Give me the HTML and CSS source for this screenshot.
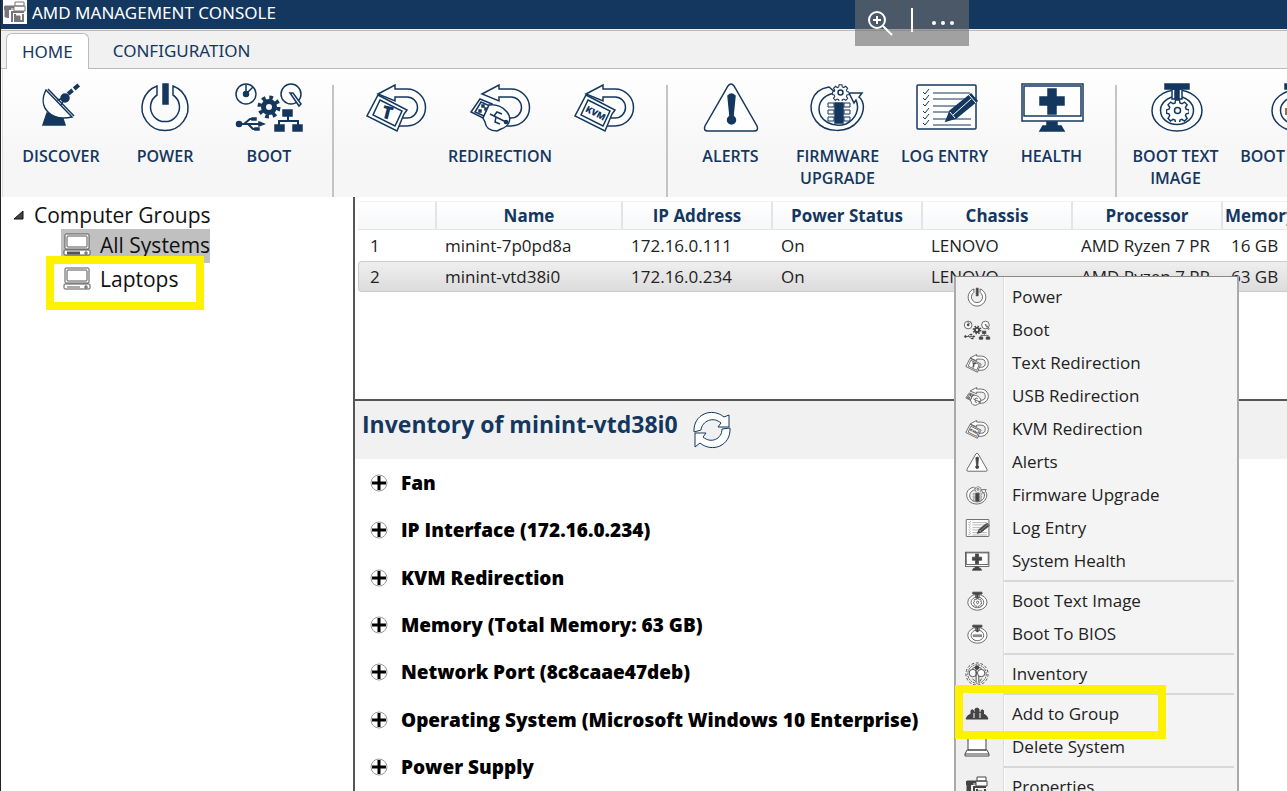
FILE: index.html
```html
<!DOCTYPE html>
<html lang="en">
<head>
<meta charset="utf-8">
<title>AMD Management Console</title>
<link rel="stylesheet" href="styles.css">
</head>
<body>
<svg class="sprite" aria-hidden="true">
  <defs>
    <symbol id="discover" viewBox="0 0 72 52">
      <path class="solid" d="M22 32 L37 35 L40 44 H18 Z"/>
      <path class="face" d="M21 9 C12 26 26 41 47 36 Z"/>
      <path d="M23 8 L49 35"/>
      <path d="M32 19 L40 17 M36 24 L40 17"/>
      <circle class="solid" cx="40" cy="17" r="4"/>
      <path class="thick" d="M43 13 L55 3" stroke-dasharray="6 2"/>
    </symbol>
    <symbol id="power" viewBox="0 0 72 52">
      <path class="face" d="M28 5 A23 23 0 1 0 44 5 V14 A14.500 14.500 0 1 1 28 14 Z"/>
      <path class="solid" d="M34 3 H39 V23 H34 Z"/>
    </symbol>
    <symbol id="gear" viewBox="0 0 24 24">
      <path class="face" d="M10 1h4l.6 3.200 2 .8 2.700-1.800 2.800 2.800-1.800 2.700.8 2 3 .6v3.600l-3 .6-.8 2 1.800 2.700-2.800 2.800-2.700-1.800-2 .8-.6 3h-4l-.6-3-2-.8-2.700 1.800L2.100 20.200l1.800-2.700-.8-2-2.600-.6v-3.600l2.600-.6.8-2L2.100 6l2.800-2.800L7.500 5l2-.8z"/>
    </symbol>
    <symbol id="boot" viewBox="0 0 72 52">
      <circle class="face" cx="13" cy="13" r="10"/><circle class="solid" cx="13" cy="13" r="2.500"/><path d="M13 4 V13 L20 6"/>
      <circle class="face" cx="58" cy="13" r="10"/><path class="face" d="M57 12 L66 25 L68 23 L60 12 Z"/>
      <circle cx="36" cy="26" r="5.500" stroke-width="5"/>
      <circle cx="36" cy="26" r="9.500" stroke-width="4" stroke-dasharray="3.700 3.760"/>
      <circle class="solid" cx="6" cy="43" r="2.500"/><path class="mid" d="M6 43 H28 M11 43 L17 38 H22 M15 43 L20 48 H25"/><path class="solid" d="M26 41 L31 43 L26 45 Z M19 37h4v2h-4z M22 47h4v2h-4z"/>
      <path class="solid" d="M50 29h9v6h-9z M42 44h9v6h-9z M60 44h9v6h-9z"/><path class="mid" d="M55 35 V40 M46 44 V40 H65 V44"/>
    </symbol>
    <symbol id="loop" viewBox="0 0 72 52">
      <path class="face" d="M18 13 L35 4 V8 H47 A18.500 18.500 0 0 1 47 45 H34 V37 H47 A10.500 10.500 0 0 0 47 16 H35 V20 Z"/>
    </symbol>
    <symbol id="card" viewBox="0 0 72 52">
      <path class="face" d="M18 14 L47 29 L44 33 L37 50 L7 35 Z"/>
      <path class="face" d="M20 19 L42 30 L35 45 L13 34 Z"/>
    </symbol>
    <symbol id="text-redirect" viewBox="0 0 72 52">
      <use href="#loop"/><use href="#card"/>
      <text class="glyph" x="22" y="38" font-size="18" transform="rotate(14 27 32)">T</text>
    </symbol>
    <symbol id="kvm-redirect" viewBox="0 0 72 52">
      <use href="#loop"/><use href="#card"/>
      <text class="glyph" x="17" y="35" font-size="9" transform="rotate(27 27 32)">KVM</text>
    </symbol>
    <symbol id="usb-redirect" viewBox="0 0 72 52">
      <use href="#loop"/>
      <path class="face" d="M16 18 L28 23 L21 38 L7 31 Z"/><path d="M17 21 L26 25 L20 35 L11 31 Z"/>
      <path class="solid" d="M18 24h2v2h-2z M21 27h1v2h-1z M15 29h2v2h-2z"/>
      <path class="face" d="M25 24 C32 23 39 26 43 31 C48 37 46 45 37 48 L33 50 C27 50 22 48 21 41 L19 37 Z"/>
      <path d="M26 33 L42 41 M30 35 L33 31 L38 33 M32 36 L31 41 L36 43"/><circle class="solid" cx="42" cy="41" r="1.500"/>
    </symbol>
    <symbol id="alert" viewBox="0 0 72 52">
      <path class="face" d="M33 5 Q36 1 39 5 L62 45 Q64 50 59 50 H13 Q8 50 10 45 Z"/>
      <path class="solid" d="M33 15 Q36.500 11 40 15 L38 35 H35 Z"/><circle class="solid" cx="36.500" cy="39" r="4"/>
    </symbol>
    <symbol id="firmware" viewBox="0 0 72 52">
      <path class="face" d="M27 6 C8 9 5 28 14 40 C23 52 46 53 56 40 C64 30 62 20 57 16 L60 12 L47 12 L52 22 L54 19 C58 28 54 38 44 43 C31 47 17 40 17 28 C17 18 25 13 34 12 Z"/>
      <path d="M26 22h6v4h-6z M26 29h6v4h-6z M26 36h6v4h-6z M42 22h6v4h-6z M42 29h6v4h-6z M42 36h6v4h-6z" stroke-width="1"/>
      <path class="solid" d="M33 22 H41 V42 H33 Z"/>
      <svg x="30" y="3" width="17" height="17" viewBox="0 0 24 24"><use href="#gear"/></svg><circle class="face" cx="38.500" cy="11.500" r="2.500"/>
    </symbol>
    <symbol id="log" viewBox="0 0 72 52">
      <rect class="face" x="8" y="4" width="59" height="44" rx="1"/>
      <path stroke-width="1" d="M14 11l2 2 4-5 M14 17l2 2 4-5 M14 23l2 2 4-5 M14 30l2 2 4-5 M14 36l2 2 4-5 M14 42l2 2 4-5"/>
      <path stroke-width="1" d="M24 12h37 M24 18h34 M24 25h30 M24 31h25 M24 38h38 M24 44h38"/>
      <path class="solid" d="M37 40 L41 30 L62 13 L68 20 L47 37 Z"/><path class="gap" d="M60 14 L67 22 M41 31 L46 37 M44 34 L62 18"/>
    </symbol>
    <symbol id="health" viewBox="0 0 72 52">
      <rect class="face" x="6" y="3" width="61" height="37"/><rect class="face" x="8" y="5" width="57" height="30"/>
      <path class="solid" d="M32 8h8v8h8v8h-8v9h-8v-9h-8v-8h8z M31 41h10v4h4l3 5H24l3-5h4z"/>
    </symbol>
    <symbol id="ring" viewBox="0 0 72 52">
      <ellipse class="face" cx="37" cy="29.500" rx="25" ry="20.500"/><ellipse class="face" cx="37" cy="29.500" rx="16.500" ry="14"/>
      <path class="face" d="M32 8h10v10h-10z"/>
      <path class="solid" d="M25 3h24v5H25z"/>
    </symbol>
    <symbol id="boot-text" viewBox="0 0 72 52">
      <use href="#ring"/><svg x="26" y="18" width="23" height="23" viewBox="0 0 24 24"><use href="#gear"/></svg><circle class="face" cx="37.500" cy="29.500" r="3"/>
      <path class="solid" d="M35 8h4v10h-4z"/>
    </symbol>
    <symbol id="boot-bios" viewBox="0 0 72 52">
      <use href="#ring"/><path class="solid" d="M35 8h4v12h-4z"/><path class="bios" d="M25 27h24v7H25z"/>
    </symbol>
    <symbol id="inventory" viewBox="0 0 26 26">
      <circle cx="13" cy="13" r="12" stroke-dasharray="3 2"/><circle cx="13" cy="13" r="10" stroke-dasharray="2 1"/>
      <circle class="face" cx="8.500" cy="12" r="4"/><circle class="face" cx="17.500" cy="12" r="4"/><path d="M8 7l5-2 5 2 M12 8v14 M15 15v7 M8 18l3 3 M18 18l-2 3"/><circle class="solid" cx="13" cy="6" r="2"/>
    </symbol>
    <symbol id="people" viewBox="0 0 26 14">
      <path class="solid" d="M2 12 Q3 8 7 7 V3.500 Q8 2 9.500 3.500 V6 L11 5 V2 Q13 0 15 2 V5 L17 6 V3.500 Q18 2 19.500 3.500 V7 Q23 8 24 12 Z"/><path class="gap" d="M10 11V6 M16 11V6"/>
    </symbol>
    <symbol id="laptop" viewBox="0 0 26 20">
      <path class="face" d="M4 1h18v12H4z M1 17l2-4h20l2 4v2H1z"/><path d="M1 17h24"/>
    </symbol>
    <symbol id="properties" viewBox="0 0 24 24">
      <path class="face" d="M2 6h10v3H5v8H2z"/><path d="M1 7h11 M1 9h7 M3 7v10 M5 9v9 M8 12h13 M9 12v10 M12 14v7h8v-7" stroke-width="2"/>
      <path class="face" d="M12 2h9v4h-9z M11 6h11v5H11z"/><path class="solid" d="M13 16h4v5h-4z"/>
    </symbol>
    <symbol id="computer" viewBox="0 0 28 24">
      <rect class="face" x="2" y="1" width="24" height="15" rx="1"/><rect class="face" x="4" y="3" width="20" height="11" rx="1"/>
      <rect class="face" x="1" y="17" width="26" height="5" rx="1"/><path class="slot" d="M4 20h13"/><path d="M22 19h2v2h-2z"/>
    </symbol>
    <symbol id="refresh" viewBox="0 0 38 38">
      <path class="face" d="M1 21 C0 3 19 -4 31 6 L36 4 V16 H25 L28 12 C20 5 9 10 8 19 Z"/>
      <path class="face" d="M37 17 C38 35 19 42 7 32 L2 36 V22 H13 L10 26 C18 33 29 28 29 18 Z"/>
    </symbol>
    <symbol id="plus" viewBox="0 0 18 18">
      <circle class="face" cx="9" cy="9" r="8" stroke="#999"/><path d="M9 2 V16 M2 9 H16" stroke-width="3"/>
    </symbol>
  </defs>
</svg>

<div class="app">
  <header class="titlebar">
    <svg class="app-icon"><use href="#properties"/></svg>
    <h1>AMD MANAGEMENT CONSOLE</h1>
  </header>
  <nav class="tabs">
    <button class="tab active">HOME</button>
    <button class="tab">CONFIGURATION</button>
  </nav>

  <div class="ribbon">
    <div class="group narrow">
      <button class="tool"><svg><use href="#discover"/></svg>DISCOVER</button>
      <button class="tool"><svg><use href="#power"/></svg>POWER</button>
      <button class="tool"><svg><use href="#boot"/></svg>BOOT</button>
    </div>
    <div class="group redirection">
      <div class="row">
        <button class="tool" aria-label="Text redirection"><svg><use href="#text-redirect"/></svg></button>
        <button class="tool" aria-label="USB redirection"><svg><use href="#usb-redirect"/></svg></button>
        <button class="tool" aria-label="KVM redirection"><svg><use href="#kvm-redirect"/></svg></button>
      </div>
      <span class="caption">REDIRECTION</span>
    </div>
    <div class="group wide">
      <button class="tool"><svg><use href="#alert"/></svg>ALERTS</button>
      <button class="tool"><svg><use href="#firmware"/></svg>FIRMWARE<br>UPGRADE</button>
      <button class="tool"><svg><use href="#log"/></svg>LOG ENTRY</button>
      <button class="tool"><svg><use href="#health"/></svg>HEALTH</button>
    </div>
    <div class="group wide last">
      <button class="tool"><svg><use href="#boot-text"/></svg>BOOT TEXT<br>IMAGE</button>
      <button class="tool"><svg><use href="#boot-bios"/></svg>BOOT TO BIOS</button>
    </div>
  </div>

  <div class="workspace">
    <aside class="sidebar">
      <button class="root"><svg class="twisty" viewBox="0 0 12 12"><path d="M11 2 V10 H2 Z"/></svg>Computer Groups</button>
      <ul class="tree">
        <li><button class="node selected"><svg><use href="#computer"/></svg>All Systems</button></li>
        <li><button class="node"><svg><use href="#computer"/></svg>Laptops</button></li>
      </ul>
    </aside>

    <main class="content">
      <section class="systems">
        <table>
          <colgroup><col class="c-num"><col class="c-name"><col class="c-std"><col class="c-std"><col class="c-std"><col class="c-std"><col class="c-mem"></colgroup>
          <thead><tr><th></th><th>Name</th><th>IP Address</th><th>Power Status</th><th>Chassis</th><th>Processor</th><th class="clip">Memory</th></tr></thead>
          <tbody>
            <tr><td>1</td><td>minint-7p0pd8a</td><td>172.16.0.111</td><td>On</td><td>LENOVO</td><td>AMD Ryzen 7 PR</td><td>16 GB</td></tr>
            <tr class="current"><td>2</td><td>minint-vtd38i0</td><td>172.16.0.234</td><td>On</td><td>LENOVO</td><td>AMD Ryzen 7 PR</td><td>63 GB</td></tr>
          </tbody>
        </table>
      </section>
      <section class="inventory">
        <header class="inv-head">
          <h2>Inventory of minint-vtd38i0</h2>
          <button class="refresh" aria-label="Refresh"><svg><use href="#refresh"/></svg></button>
        </header>
        <ul class="inv-list">
          <li><button><svg><use href="#plus"/></svg>Fan</button></li>
          <li><button><svg><use href="#plus"/></svg>IP Interface (172.16.0.234)</button></li>
          <li><button><svg><use href="#plus"/></svg>KVM Redirection</button></li>
          <li><button><svg><use href="#plus"/></svg>Memory (Total Memory: 63 GB)</button></li>
          <li><button><svg><use href="#plus"/></svg>Network Port (8c8caae47deb)</button></li>
          <li><button><svg><use href="#plus"/></svg>Operating System (Microsoft Windows 10 Enterprise)</button></li>
          <li><button><svg><use href="#plus"/></svg>Power Supply</button></li>
        </ul>
      </section>
    </main>
  </div>

  <div class="menu" role="menu">
    <button role="menuitem"><svg><use href="#power"/></svg><span>Power</span></button>
    <button role="menuitem"><svg><use href="#boot"/></svg><span>Boot</span></button>
    <button role="menuitem"><svg><use href="#text-redirect"/></svg><span>Text Redirection</span></button>
    <button role="menuitem"><svg><use href="#usb-redirect"/></svg><span>USB Redirection</span></button>
    <button role="menuitem"><svg><use href="#kvm-redirect"/></svg><span>KVM Redirection</span></button>
    <button role="menuitem"><svg><use href="#alert"/></svg><span>Alerts</span></button>
    <button role="menuitem"><svg><use href="#firmware"/></svg><span>Firmware Upgrade</span></button>
    <button role="menuitem"><svg><use href="#log"/></svg><span>Log Entry</span></button>
    <button role="menuitem"><svg><use href="#health"/></svg><span>System Health</span></button>
    <hr>
    <button role="menuitem"><svg><use href="#boot-text"/></svg><span>Boot Text Image</span></button>
    <button role="menuitem"><svg><use href="#boot-bios"/></svg><span>Boot To BIOS</span></button>
    <hr>
    <button role="menuitem"><svg class="fine"><use href="#inventory"/></svg><span>Inventory</span></button>
    <hr>
    <button role="menuitem"><svg class="fine short"><use href="#people"/></svg><span>Add to Group</span></button>
    <button role="menuitem"><svg class="fine low"><use href="#laptop"/></svg><span>Delete System</span></button>
    <hr>
    <button role="menuitem"><svg class="fine"><use href="#properties"/></svg><span>Properties</span></button>
  </div>

  <div class="viewer-bar">
    <button aria-label="Zoom in"><svg viewBox="0 0 26 26"><circle cx="10" cy="10" r="8"/><path d="M16 16 L25 25 M6 10 H14 M10 6 V14"/></svg></button>
    <i></i>
    <button aria-label="More"><svg viewBox="0 0 26 26"><circle class="dot" cx="3" cy="13" r="2"/><circle class="dot" cx="12" cy="13" r="2"/><circle class="dot" cx="21" cy="13" r="2"/></svg></button>
  </div>
  <div class="mark mark-group"></div>
  <div class="mark mark-menu"></div>
</div>
</body>
</html>
```
FILE: styles.css
```css
* { box-sizing: border-box; }
body {
  margin: 0;
  font-family: "Open Sans", "Noto Sans", sans-serif;
  color: #222;
  background: #fff;
}
button {
  margin: 0;
  padding: 0;
  border: 0;
  background: none;
  font: inherit;
  color: inherit;
}
ul { margin: 0; padding: 0; list-style: none; }
h1, h2 { margin: 0; }

.sprite { position: absolute; width: 0; height: 0; }
svg { display: block; flex: none; fill: none; stroke: currentColor; }
.tool svg { stroke-width: 1.5px; }
.face { fill: #fff; }
.solid { fill: currentColor; }
.mid { stroke-width: 2px; }
.thick { stroke-width: 4px; }
.gap { stroke: #fff; stroke-width: 1px; }
.glyph { fill: currentColor; stroke: none; font-family: "Open Sans", sans-serif; font-weight: 800; }
.bios { fill: var(--bios, #a5674c); stroke: none; }
.slot { stroke-width: var(--slot, 1px); }

.app {
  position: relative;
  display: flex;
  flex-direction: column;
  height: 100vh;
  overflow: hidden;
  border-left: 1px solid #222;
}

.titlebar {
  display: flex;
  gap: 5px;
  height: 29px;
  padding-left: 2px;
  background: #14375f;
  color: #fff;
}
.app-icon { width: 24px; height: 24px; background: #fff; color: #777; stroke-width: 1px; }
.titlebar h1 { font-family: "Noto Sans", sans-serif; font-size: 17px; line-height: 26px; font-weight: 400; }

.tabs {
  display: flex;
  align-items: flex-end;
  height: 40px;
  padding-left: 5px;
  border-top: 1px solid #eee;
  border-bottom: 1px solid #bbb;
  background: #f1f1f1;
  box-shadow: inset 0 1px #bbb;
  color: #14375f;
  font-family: "Noto Sans", sans-serif;
}
.tab { height: 35px; padding: 0 24px; font-size: 17px; line-height: 36px; }
.tab.active {
  height: 36px;
  margin-bottom: -1px;
  padding: 0 15px;
  border: 1px solid #bbb;
  border-bottom: 0;
  border-radius: 6px 6px 0 0;
  background: #fff;
}

.ribbon {
  display: flex;
  flex: none;
  height: 128px;
  margin-left: 1px;
  border-left: 1px solid #ddd;
  background: linear-gradient(#fff, #f6f6f6 70%);
  color: #14375f;
  font-size: 16px;
  line-height: 22px;
  font-weight: 600;
  overflow: hidden;
}
.group { display: flex; flex: none; height: 112px; margin-top: 16px; border-right: 2px solid #c4c4c4; }
.row { display: flex; }
.group.narrow { padding: 0 11px 0 6px; }
.group.redirection { flex-direction: column; align-items: center; padding: 0 10px; }
.group.wide { padding: 0 10px 0 9px; }
.group.last { gap: 7px; padding: 0 0 0 5px; border: 0; }
.tool { display: flex; flex-direction: column; align-items: center; flex: none; width: 104px; white-space: nowrap; }
.wide .tool { width: 107px; }
.last .tool + .tool { width: 120px; }
.tool svg { width: 72px; height: 52px; margin: -4px 0 12px; }

.workspace { display: flex; flex: 1; min-height: 0; }
.sidebar { width: 354px; flex: none; border-right: 2px solid #555; font-size: 21px; line-height: 28px; color: #111; }
.root { display: flex; align-items: center; gap: 10px; height: 32px; padding: 4px 0 0 11px; }
.twisty { width: 12px; height: 12px; fill: #444; }
.tree { padding-left: 60px; }
.node { display: flex; align-items: center; gap: 9px; height: 34px; padding: 0 0 2px 2px; }
.node svg { width: 28px; height: 24px; color: #555; stroke-width: 1px; }
.node.selected { --slot: 3px; background: #c0c0c0; }

.content { display: flex; flex-direction: column; flex: 1; min-width: 0; }
.systems { flex: none; height: 204px; padding: 4px 0 0 3px; overflow: hidden; border-bottom: 2px solid #555; }
table { width: 1039px; table-layout: fixed; border-spacing: 0; font-size: 17px; }
.c-num { width: 79px; }
.c-name { width: 186px; }
.c-std { width: 150px; }
.c-mem { width: 174px; }
th {
  height: 29px;
  padding: 0;
  border: 1px solid #e4e4e4;
  border-width: 1px 2px 1px 0;
  border-top-color: #f3f3f3;
  background: linear-gradient(#fff, #f6f7f9);
  color: #14375f;
  font-weight: 700;
  line-height: 26px;
}
th.clip { padding-left: 2px; text-align: left; }
td { height: 31px; padding: 0 0 0 8px; line-height: 28px; white-space: nowrap; overflow: hidden; }
td:first-child { padding-left: 12px; }
.current td { border: 1px solid #ccc; border-width: 1px 0; background: linear-gradient(#efefef, #dcdcdc); }
.current td:first-child { border-left-width: 1px; border-radius: 4px 0 0 4px; padding-left: 11px; }

.inventory { display: flex; flex-direction: column; flex: 1; min-height: 0; }
.inv-head { display: flex; gap: 15px; height: 58px; flex: none; padding-left: 7px; background: #f1f1f1; color: #14375f; }
.inv-head h2 { font-size: 23px; line-height: 46px; font-weight: 700; }
.refresh { align-self: center; }
.refresh svg { width: 38px; height: 38px; stroke-width: 1px; }
.inv-list { display: flex; flex-direction: column; flex: 1; padding-left: 15px; color: #000; font-size: 19px; line-height: 24px; font-weight: 800; }
.inv-list li { display: flex; flex: 1; align-items: center; }
.inv-list button { display: flex; align-items: center; gap: 13px; }
.inv-list svg { width: 18px; height: 18px; stroke-width: 1px; }

.menu {
  position: absolute;
  top: 276px;
  left: 953px;
  width: 285px;
  padding: 3px;
  border: 2px solid #aaa;
  border-top: 1px solid #888;
  background: linear-gradient(90deg, #f0f0f0 47px, #ddd 47px, #ddd 48px, #fff 48px, #fff 49px, #f4f4f4 49px);
  font-size: 17px;
  --bios: #888;
}
.menu button { display: flex; align-items: center; gap: 20px; width: 100%; height: 33px; padding-left: 3px; text-align: left; }
.menu svg { width: 30px; height: 20px; color: #444; stroke-width: 2px; }
.menu svg svg, .menu svg.fine { stroke-width: 1px; }
.menu svg.fine { height: 24px; }
.menu svg.short { height: 14px; }
.menu svg.low { height: 20px; }
.menu hr { height: 2px; margin: 3px 0 2px 45px; border: 0; background: #d8d8d8; }

.viewer-bar {
  position: absolute;
  top: 0;
  left: 854px;
  display: flex;
  justify-content: space-between;
  width: 114px;
  height: 46px;
  padding: 8px 12px;
  background: rgba(109, 109, 109, 0.61);
  color: #fff;
}
.viewer-bar svg { width: 26px; height: 26px; stroke-width: 2px; }
.viewer-bar i { width: 2px; height: 24px; background: #fff; }
.viewer-bar .dot { fill: #fff; stroke: none; }

.mark { position: absolute; border: 8px solid #fff200; pointer-events: none; }
.mark-group { top: 256px; left: 45px; width: 158px; height: 54px; }
.mark-menu { top: 685px; left: 954px; width: 211px; height: 54px; }
```
